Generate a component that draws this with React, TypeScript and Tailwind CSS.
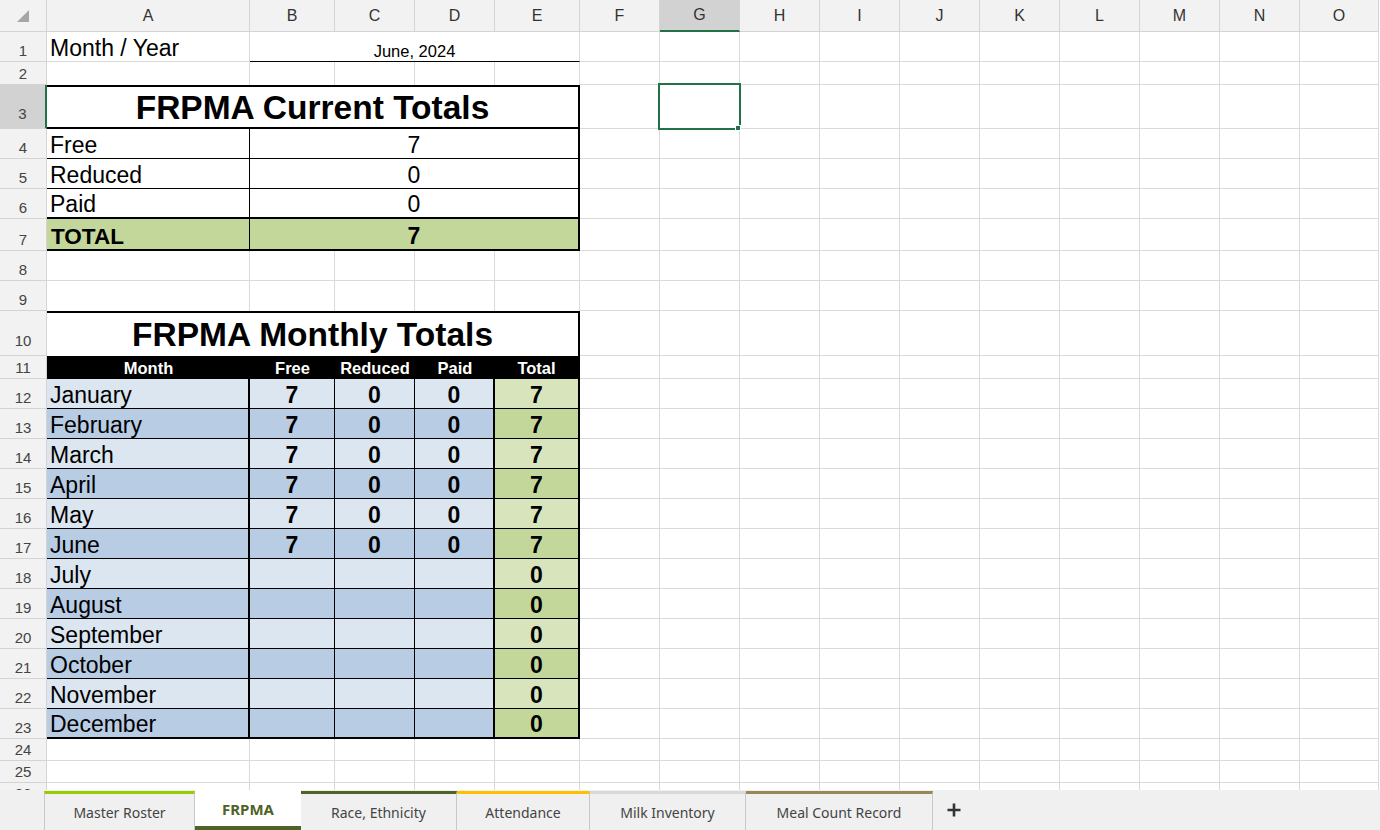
import React from 'react';

const COLS = ['A', 'B', 'C', 'D', 'E', 'F', 'G', 'H', 'I', 'J', 'K', 'L', 'M', 'N', 'O'];
const REST = ['F', 'G', 'H', 'I', 'J', 'K', 'L', 'M', 'N', 'O'];

const MONTHS = [
  { name: 'January', v: ['7', '0', '0'], t: '7' },
  { name: 'February', v: ['7', '0', '0'], t: '7' },
  { name: 'March', v: ['7', '0', '0'], t: '7' },
  { name: 'April', v: ['7', '0', '0'], t: '7' },
  { name: 'May', v: ['7', '0', '0'], t: '7' },
  { name: 'June', v: ['7', '0', '0'], t: '7' },
  { name: 'July', v: ['', '', ''], t: '0' },
  { name: 'August', v: ['', '', ''], t: '0' },
  { name: 'September', v: ['', '', ''], t: '0' },
  { name: 'October', v: ['', '', ''], t: '0' },
  { name: 'November', v: ['', '', ''], t: '0' },
  { name: 'December', v: ['', '', ''], t: '0' },
];

const TABS = [
  { name: 'Master Roster', w: 'w-[151px]', bar: 'border-t-[#99cc00]' },
  { name: 'FRPMA', w: 'w-[106px]', bar: '', active: true },
  { name: 'Race, Ethnicity', w: 'w-[156px]', bar: 'border-t-[#4f6228]' },
  { name: 'Attendance', w: 'w-[133px]', bar: 'border-t-[#ffc000]' },
  { name: 'Milk Inventory', w: 'w-[156px]', bar: 'border-t-[#d9d9d9]' },
  { name: 'Meal Count Record', w: 'w-[187px]', bar: 'border-t-[#948a54]' },
];

// border specs: g = gridline, k1 = thin black, k2 = thick black, n = none
const R: Record<string, string> = {
  g: 'border-r border-r-[#dadada]',
  k1: 'border-r border-r-black',
  k2: 'border-r-2 border-r-black',
  n: '',
};
const B: Record<string, string> = {
  g: 'border-b border-b-[#dadada]',
  k1: 'border-b border-b-black',
  k2: 'border-b-2 border-b-black',
  n: '',
};

function Cell({
  r = 'g',
  b = 'g',
  top = false,
  className = '',
  children,
}: {
  r?: string;
  b?: string;
  top?: boolean;
  className?: string;
  children?: React.ReactNode;
}) {
  return (
    <div
      className={`flex items-end overflow-hidden whitespace-nowrap leading-none ${R[r]} ${B[b]} ${
        top ? 'border-t-2 border-t-black' : ''
      } ${className}`}
    >
      {children}
    </div>
  );
}

function RowHead({ n, active = false, tall = false }: { n: number; active?: boolean; tall?: boolean }) {
  return (
    <div
      className={`flex items-end justify-center leading-none text-[15px] text-[#444] border-b border-b-[#d4d4d4] ${
        tall ? 'pb-[7px]' : 'pb-[3px]'
      } ${active ? 'bg-[#d2d2d2] border-r-2 border-r-[#217346]' : 'bg-[#f2f2f2] border-r border-r-[#d4d4d4]'}`}
    >
      {n}
    </div>
  );
}

function Rest({ row }: { row: number }) {
  return (
    <>
      {REST.map((c) =>
        row === 3 && c === 'G' ? (
          <div key={c} className="relative border-r border-b border-[#dadada]">
            <div className="absolute -left-[2px] -top-[2px] w-[83px] h-[47px] border-2 border-[#217346]" />
            <div className="absolute right-[-2px] bottom-[-3px] w-[6px] h-[6px] bg-[#217346] border border-white" />
          </div>
        ) : (
          <Cell key={c} />
        )
      )}
    </>
  );
}

export default function App() {
  return (
    <div className="w-[1380px] h-[830px] overflow-hidden bg-white font-['Liberation_Sans',Arial,sans-serif] text-black">
      <div className="h-[790px] overflow-hidden">
        <div className="grid grid-cols-[47px_203px_85px_80px_80px_85px_repeat(9,80px)_79px] grid-rows-[32px_30px_23px_44px_30px_30px_30px_32px_30px_30px_45px_23px_repeat(12,30px)_22px_22px_22px]">
          {/* column headers */}
          <div className="relative bg-[#f2f2f2] border-r border-b border-[#d4d4d4]">
            <svg className="absolute left-[17px] top-[10px]" width="12" height="12" viewBox="0 0 12 12">
              <polygon points="12,0 12,12 0,12" fill="#a6a6a6" />
            </svg>
          </div>
          {COLS.map((c) => (
            <div
              key={c}
              className={`flex items-center justify-center text-[16px] text-[#333] border-r border-r-[#d4d4d4] ${
                c === 'G' ? 'bg-[#d2d2d2] border-b-2 border-b-[#217346]' : 'bg-[#f2f2f2] border-b border-b-[#d4d4d4]'
              }`}
            >
              {c}
            </div>
          ))}

          {/* row 1 */}
          <RowHead n={1} />
          <Cell className="pl-[3px] pb-[1px] text-[23px]">Month / Year</Cell>
          <Cell b="k1" className="col-span-4 justify-center pb-[2px] text-[16.5px]">
            June, 2024
          </Cell>
          <Rest row={1} />

          {/* row 2 */}
          <RowHead n={2} />
          <Cell b="n" />
          <Cell b="n" />
          <Cell b="n" />
          <Cell b="n" />
          <Cell b="n" />
          <Rest row={2} />

          {/* row 3 */}
          <RowHead n={3} active tall />
          <Cell top r="k2" b="k2" className="col-span-5 justify-center pb-[3px] text-[33.5px] font-bold">
            FRPMA Current Totals
          </Cell>
          <Rest row={3} />

          {/* rows 4-6 */}
          {[
            ['Free', '7'],
            ['Reduced', '0'],
            ['Paid', '0'],
          ].map(([label, val], i) => (
            <React.Fragment key={label}>
              <RowHead n={4 + i} />
              <Cell r="k1" b={i === 2 ? 'k2' : 'k1'} className="pl-[3px] pb-[1px] text-[23px]">
                {label}
              </Cell>
              <Cell r="k2" b={i === 2 ? 'k2' : 'k1'} className="col-span-4 justify-center pb-[1px] text-[23px]">
                {val}
              </Cell>
              <Rest row={4 + i} />
            </React.Fragment>
          ))}

          {/* row 7 */}
          <RowHead n={7} />
          <Cell r="k1" b="k2" className="pl-[4px] pb-[1px] text-[22.5px] font-bold bg-[#c4d79b]">
            TOTAL
          </Cell>
          <Cell r="k2" b="k2" className="col-span-4 justify-center pb-[1px] text-[23px] font-bold bg-[#c4d79b]">
            7
          </Cell>
          <Rest row={7} />

          {/* rows 8-9 */}
          <RowHead n={8} />
          {COLS.map((c) => (
            <Cell key={c} />
          ))}
          <RowHead n={9} />
          <Cell b="n" />
          <Cell b="n" />
          <Cell b="n" />
          <Cell b="n" />
          <Cell b="n" />
          <Rest row={9} />

          {/* row 10 */}
          <RowHead n={10} tall />
          <Cell top r="k2" b="n" className="col-span-5 justify-center pb-[5px] text-[33.5px] font-bold">
            FRPMA Monthly Totals
          </Cell>
          <Rest row={10} />

          {/* row 11 */}
          <RowHead n={11} />
          <Cell r="n" b="n" className="justify-center pb-[3px] bg-black text-white text-[16.5px] font-bold">
            Month
          </Cell>
          <Cell r="n" b="n" className="justify-center pb-[3px] bg-black text-white text-[16.5px] font-bold">
            Free
          </Cell>
          <Cell r="n" b="n" className="justify-center pb-[3px] bg-black text-white text-[16.5px] font-bold">
            Reduced
          </Cell>
          <Cell r="n" b="n" className="justify-center pb-[3px] bg-black text-white text-[16.5px] font-bold">
            Paid
          </Cell>
          <Cell r="k2" b="n" className="justify-center pb-[3px] bg-black text-white text-[16.5px] font-bold">
            Total
          </Cell>
          <Rest row={11} />

          {/* rows 12-23 */}
          {MONTHS.map((m, i) => {
            const dark = i % 2 === 1;
            const last = i === MONTHS.length - 1;
            const blue = dark ? 'bg-[#b8cce4]' : 'bg-[#dce6f1]';
            const green = dark ? 'bg-[#c4d79b]' : 'bg-[#d8e4bc]';
            const bb = last ? 'k2' : 'k1';
            return (
              <React.Fragment key={m.name}>
                <RowHead n={12 + i} />
                <Cell r="k2" b={bb} className={`pl-[3px] pb-[1px] text-[23px] ${blue}`}>
                  {m.name}
                </Cell>
                <Cell r="k1" b={bb} className={`justify-center pb-[1px] text-[23px] font-bold ${blue}`}>
                  {m.v[0]}
                </Cell>
                <Cell r="k1" b={bb} className={`justify-center pb-[1px] text-[23px] font-bold ${blue}`}>
                  {m.v[1]}
                </Cell>
                <Cell r="k2" b={bb} className={`justify-center pb-[1px] text-[23px] font-bold ${blue}`}>
                  {m.v[2]}
                </Cell>
                <Cell r="k2" b={bb} className={`justify-center pb-[1px] text-[23px] font-bold ${green}`}>
                  {m.t}
                </Cell>
                <Rest row={12 + i} />
              </React.Fragment>
            );
          })}

          {/* rows 24-26 */}
          {[24, 25, 26].map((n) => (
            <React.Fragment key={n}>
              <RowHead n={n} />
              {COLS.map((c) => (
                <Cell key={c} />
              ))}
            </React.Fragment>
          ))}
        </div>
      </div>

      {/* sheet tabs */}
      <div className="h-[40px] flex bg-[#f0f0f0] pl-[44px] font-['Noto_Sans','Open_Sans',sans-serif] text-[14px]">
        {TABS.map((t, i) =>
          t.active ? (
            <div
              key={t.name}
              className={`${t.w} flex items-center justify-center bg-white border-b-4 border-b-[#4f6228] font-bold text-[15px] text-[#4f6228] pt-[2px]`}
            >
              {t.name}
            </div>
          ) : (
            <div
              key={t.name}
              className={`${t.w} mt-px flex items-center justify-center border-t-[3px] ${t.bar} border-r border-r-[#c8c8c8] text-[#444] ${
                i === 0 ? 'border-l border-l-[#c8c8c8]' : ''
              }`}
            >
              {t.name}
            </div>
          )
        )}
        <div className="w-[42px] flex items-center justify-center">
          <svg width="16" height="16" viewBox="0 0 16 16">
            <path d="M8 1.5v13M1.5 8h13" stroke="#333" strokeWidth="2.6" />
          </svg>
        </div>
      </div>
    </div>
  );
}
